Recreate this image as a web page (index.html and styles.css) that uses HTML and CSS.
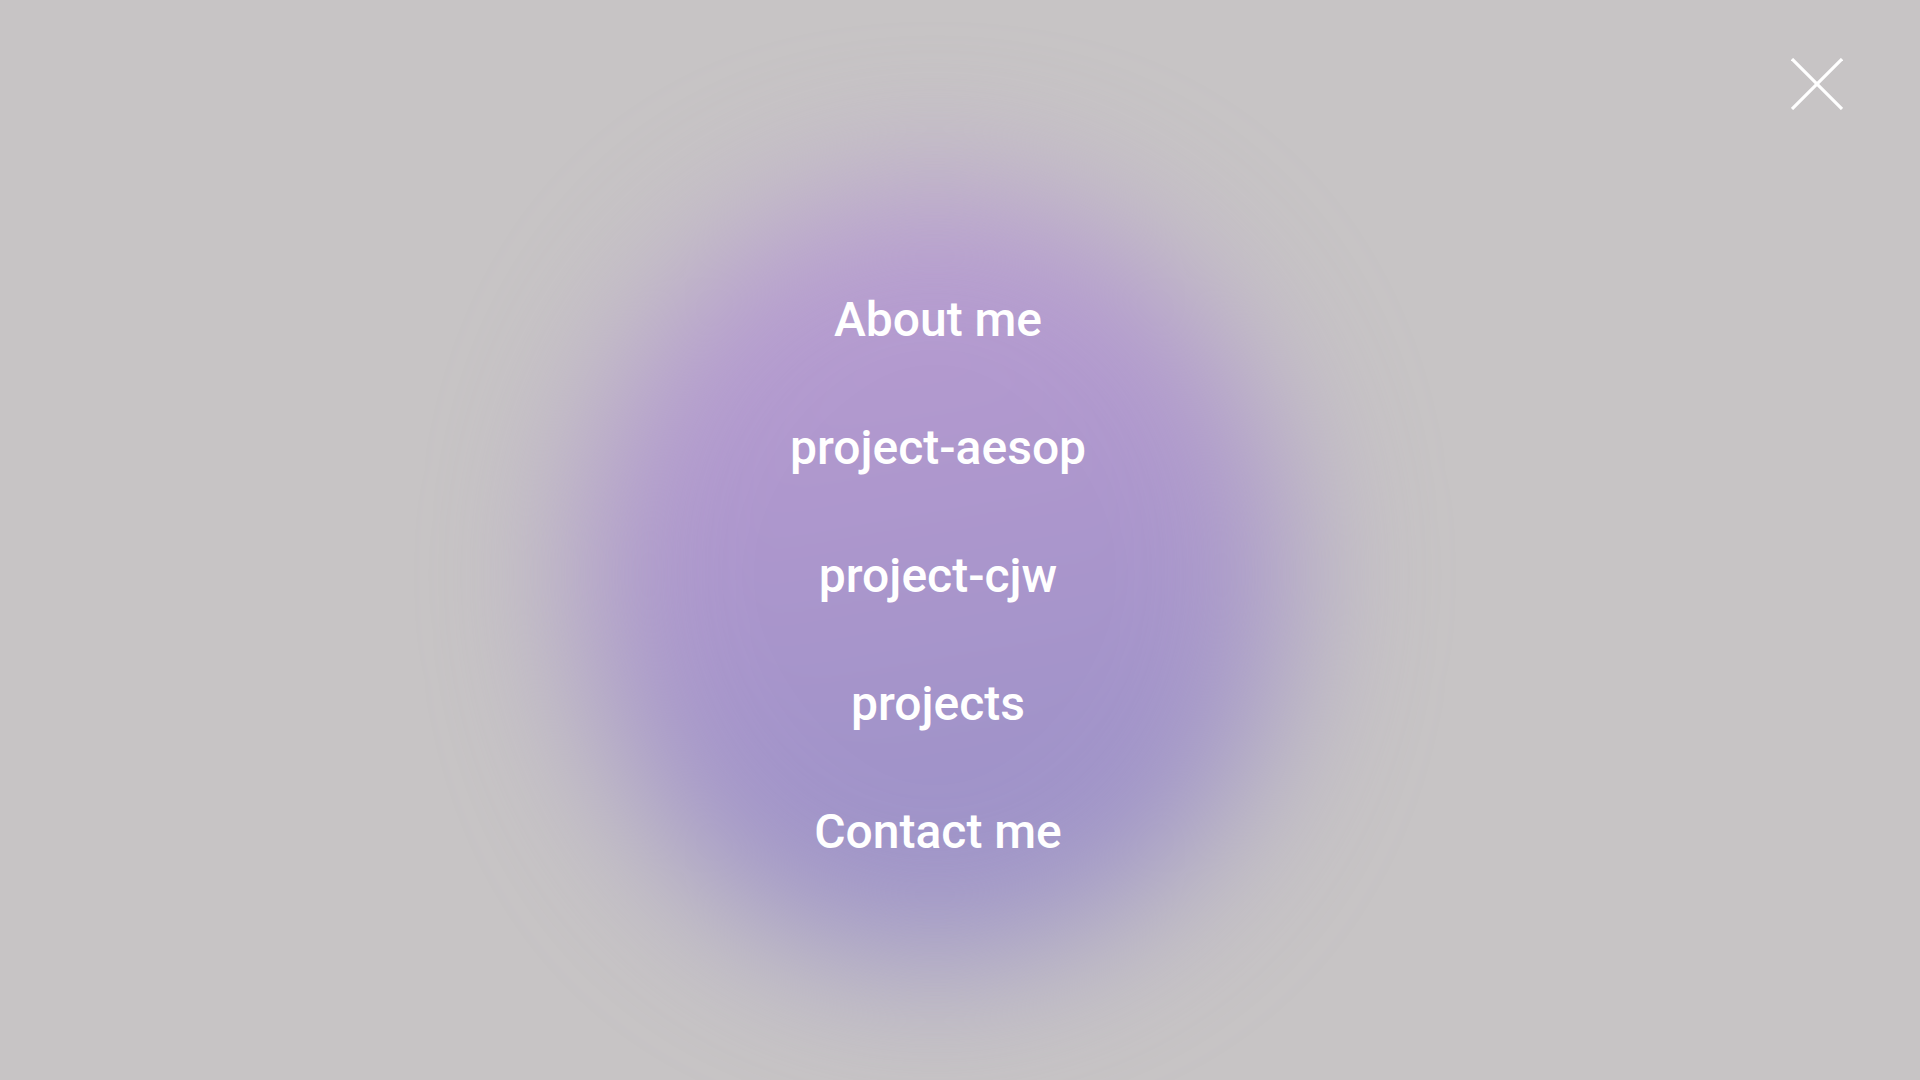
FILE: index.html
```html
<!DOCTYPE html>
<html lang="en">
<head>
<meta charset="utf-8">
<title>Menu</title>
<link rel="stylesheet" href="styles.css">
</head>
<body>
<div class="overlay">
  <div class="blob"></div>
  <button class="close" aria-label="Close menu">
    <svg width="52" height="52" viewBox="0 0 52 52" fill="none" stroke="#ffffff" stroke-width="3.2" stroke-linecap="butt">
      <line x1="1" y1="1" x2="51" y2="51"/>
      <line x1="51" y1="1" x2="1" y2="51"/>
    </svg>
  </button>
  <nav class="menu">
    <a class="menu-link" href="#">About me</a>
    <a class="menu-link" href="#">project-aesop</a>
    <a class="menu-link" href="#">project-cjw</a>
    <a class="menu-link" href="#">projects</a>
    <a class="menu-link" href="#">Contact me</a>
  </nav>
</div>
</body>
</html>
```
FILE: styles.css
```css
* { box-sizing: border-box; }
html, body {
  margin: 0;
  padding: 0;
  width: 100%;
  height: 100%;
  overflow: hidden;
}
body {
  background: #c7c4c5;
  font-family: Roboto, "Noto Sans", sans-serif;
}
.overlay {
  position: relative;
  width: 1920px;
  height: 1080px;
  overflow: hidden;
}
.blob {
  position: absolute;
  left: 580px;
  top: 185px;
  width: 710px;
  height: 780px;
  border-radius: 50%;
  background: linear-gradient(170deg, #bb9fd2 0%, #ae97cd 40%, #9d92c8 80%, #a49cc8 100%);
  filter: blur(70px);
}
.close {
  position: absolute;
  top: 58px;
  right: 77px;
  width: 52px;
  height: 52px;
  padding: 0;
  border: 0;
  background: transparent;
  cursor: pointer;
}
.close svg { display: block; }
.menu {
  position: relative;
  display: flex;
  flex-direction: column;
  align-items: center;
  gap: 72px;
  padding-top: 292px;
  padding-right: 44px;
}
.menu-link {
  color: #ffffff;
  text-decoration: none;
  font-weight: 500;
  font-size: 48px;
  line-height: 56px;
}
```
